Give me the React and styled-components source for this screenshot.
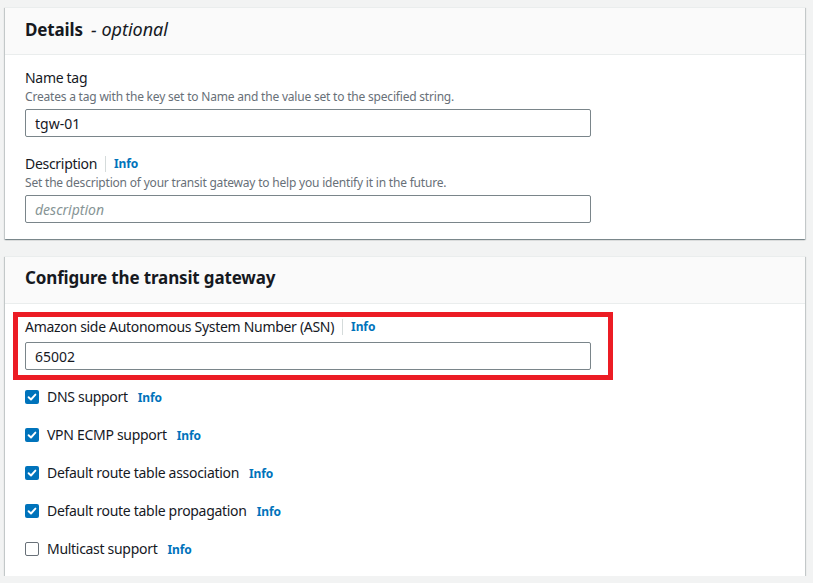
import React from 'react';
import styled, { createGlobalStyle } from 'styled-components';

const GlobalStyle = createGlobalStyle`
  body {
    margin: 0;
    background: #f2f3f3;
    font-family: "Noto Sans", "Open Sans", Arial, sans-serif;
    color: #16191f;
  }
`;

const checks = [
  { label: 'DNS support', checked: true },
  { label: 'VPN ECMP support', checked: true },
  { label: 'Default route table association', checked: true },
  { label: 'Default route table propagation', checked: true },
  { label: 'Multicast support', checked: false },
];

const CheckIcon = () => (
  <svg width="10" height="10" viewBox="0 0 10 10">
    <path d="M1.6 5.2 L4 7.5 L8.4 2.6" fill="none" stroke="#fff" strokeWidth="1.9" strokeLinecap="round" strokeLinejoin="round" />
  </svg>
);

const App = () => {
  return (
    <Page>
      <GlobalStyle />
      <Card>
        <CardHeader>
          <Title>
            Details <Optional>- optional</Optional>
          </Title>
        </CardHeader>
        <CardBody>
          <Field>
            <Label>Name tag</Label>
            <Hint>Creates a tag with the key set to Name and the value set to the specified string.</Hint>
            <Input defaultValue="tgw-01" />
          </Field>
          <Field>
            <Label>
              Description
              <Separator />
              <Info>Info</Info>
            </Label>
            <Hint>Set the description of your transit gateway to help you identify it in the future.</Hint>
            <Input placeholder="description" />
          </Field>
        </CardBody>
      </Card>

      <Card>
        <CardHeader>
          <Title>Configure the transit gateway</Title>
        </CardHeader>
        <CardBody>
          <Field>
            <Highlight />
            <Label>
              Amazon side Autonomous System Number (ASN)
              <Separator />
              <Info>Info</Info>
            </Label>
            <Input defaultValue="65002" />
          </Field>
          {checks.map((c) => (
            <CheckRow key={c.label}>
              <Box checked={c.checked}>{c.checked && <CheckIcon />}</Box>
              <CheckLabel>{c.label}</CheckLabel>
              <Info>Info</Info>
            </CheckRow>
          ))}
        </CardBody>
      </Card>
    </Page>
  );
};

const Page = styled.div`
  padding: 7px 8px 0 5px;
  display: flex;
  flex-direction: column;
  gap: 17px;
`;

const Card = styled.section`
  background: #fff;
  box-shadow: 0 1px 1px 0 rgba(0, 28, 36, 0.3), 1px 1px 1px 0 rgba(0, 28, 36, 0.15),
    -1px 1px 1px 0 rgba(0, 28, 36, 0.15);
  border-top: 1px solid #eaeded;
`;

const CardHeader = styled.div`
  background: #fafafa;
  border-bottom: 1px solid #eaeded;
  height: 47px;
  box-sizing: border-box;
  padding: 0 20px 4px;
  display: flex;
  align-items: center;
`;

const Title = styled.h2`
  margin: 0;
  font-size: 17px;
  font-weight: 700;
  line-height: 22px;
  letter-spacing: -0.15px;
  color: #16191f;
`;

const Optional = styled.span`
  font-style: italic;
  font-weight: 400;
  font-size: 18px;
  margin-left: 4px;
  letter-spacing: 0;
`;

const CardBody = styled.div`
  padding: 12px 20px 16px;
  display: flex;
  flex-direction: column;
  gap: 16px;
`;

const Field = styled.div`
  position: relative;
  display: flex;
  flex-direction: column;
`;

const Highlight = styled.div`
  position: absolute;
  left: -12px;
  top: -4px;
  width: 600px;
  height: 68px;
  border: 5px solid #ec1c24;
  box-sizing: border-box;
  pointer-events: none;
`;

const Label = styled.div`
  display: flex;
  align-items: center;
  font-size: 14px;
  line-height: 22px;
  letter-spacing: -0.3px;
  color: #16191f;
`;

const Separator = styled.span`
  display: inline-block;
  width: 1px;
  height: 16px;
  background: #d5dbdb;
  margin: 0 8px;
`;

const Info = styled.span`
  font-size: 12px;
  font-weight: 700;
  letter-spacing: -0.1px;
  color: #0073bb;
`;

const Hint = styled.div`
  font-size: 12px;
  line-height: 16px;
  letter-spacing: -0.2px;
  color: #687078;
`;

const Input = styled.input`
  box-sizing: border-box;
  width: 566px;
  height: 28px;
  margin-top: 4px;
  border: 1px solid #7a858a;
  border-radius: 2px;
  padding: 0 9px;
  font-family: inherit;
  font-size: 14px;
  color: #16191f;
  outline: none;
  &::placeholder {
    color: #879596;
    font-style: italic;
  }
`;

const CheckRow = styled.label`
  display: flex;
  align-items: center;
  height: 22px;
`;

const Box = styled.span`
  box-sizing: border-box;
  width: 14px;
  height: 14px;
  border-radius: 2px;
  display: flex;
  align-items: center;
  justify-content: center;
  background: ${({ checked }) => (checked ? '#0073bb' : '#fff')};
  border: ${({ checked }) => (checked ? 'none' : '1.5px solid #687078')};
  margin-right: 8px;
`;

const CheckLabel = styled.span`
  font-size: 14px;
  line-height: 22px;
  letter-spacing: -0.3px;
  margin-right: 10px;
`;

export default App;
